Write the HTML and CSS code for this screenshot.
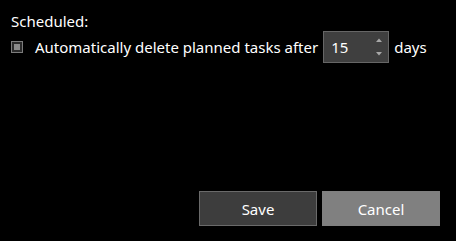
FILE: index.html
```html
<!DOCTYPE html>
<html>
<head>
<meta charset="utf-8">
<link rel="stylesheet" href="styles.css">
</head>
<body>
<div class="page">
  <div class="title">Scheduled:</div>
  <div class="row">
    <span class="check"><span class="check-mark"></span></span>
    <span class="label">Automatically delete planned tasks after</span>
    <span class="spin">
      <span class="spin-value">15</span>
      <span class="spin-arrows">
        <svg width="6" height="4" viewBox="0 0 6 4"><path d="M0 4 L3 0.5 L6 4 Z" fill="#a8a8a8"/></svg>
        <svg width="6" height="4" viewBox="0 0 6 4"><path d="M0 0 L3 3.5 L6 0 Z" fill="#a8a8a8"/></svg>
      </span>
    </span>
    <span class="label">days</span>
  </div>
  <div class="spacer"></div>
  <div class="actions">
    <button class="btn btn-save">Save</button>
    <button class="btn btn-cancel">Cancel</button>
  </div>
</div>
</body>
</html>
```
FILE: styles.css
```css
html, body {
  margin: 0;
  padding: 0;
  background: #000;
}
.page {
  box-sizing: border-box;
  width: 456px;
  height: 241px;
  padding: 11px 16px 15px 11px;
  display: flex;
  flex-direction: column;
  font-family: "Noto Sans", "Open Sans", sans-serif;
  font-size: 15px;
  color: #fff;
}
.title {
  line-height: 20px;
}
.row {
  display: flex;
  align-items: center;
}
.check {
  box-sizing: border-box;
  width: 12px;
  height: 12px;
  border: 1px solid #7c7c7c;
  background: #2a2a2a;
  display: flex;
  align-items: center;
  justify-content: center;
  margin-right: 12px;
}
.check-mark {
  width: 6px;
  height: 6px;
  background: #8a8a8a;
}
.label {
  line-height: 20px;
}
.spin {
  box-sizing: border-box;
  width: 66px;
  height: 32px;
  margin: 0 5px;
  background: #3f3f3f;
  border: 1px solid #666;
  display: flex;
  align-items: center;
  justify-content: space-between;
  padding: 0 6px 0 7px;
}
.spin-value {
  line-height: 20px;
}
.spin-arrows {
  display: flex;
  flex-direction: column;
  justify-content: space-between;
  height: 18px;
}
.spin-arrows svg {
  display: block;
}
.spacer {
  flex: 1;
}
.actions {
  display: flex;
  justify-content: flex-end;
  gap: 5px;
}
.btn {
  box-sizing: border-box;
  width: 118px;
  height: 35px;
  font-family: inherit;
  font-size: 15px;
  color: #fff;
  padding: 0;
  cursor: default;
}
.btn-save {
  background: #3d3d3d;
  border: 1px solid #6a6a6a;
}
.btn-cancel {
  background: #808080;
  border: 1px solid #808080;
}
```
